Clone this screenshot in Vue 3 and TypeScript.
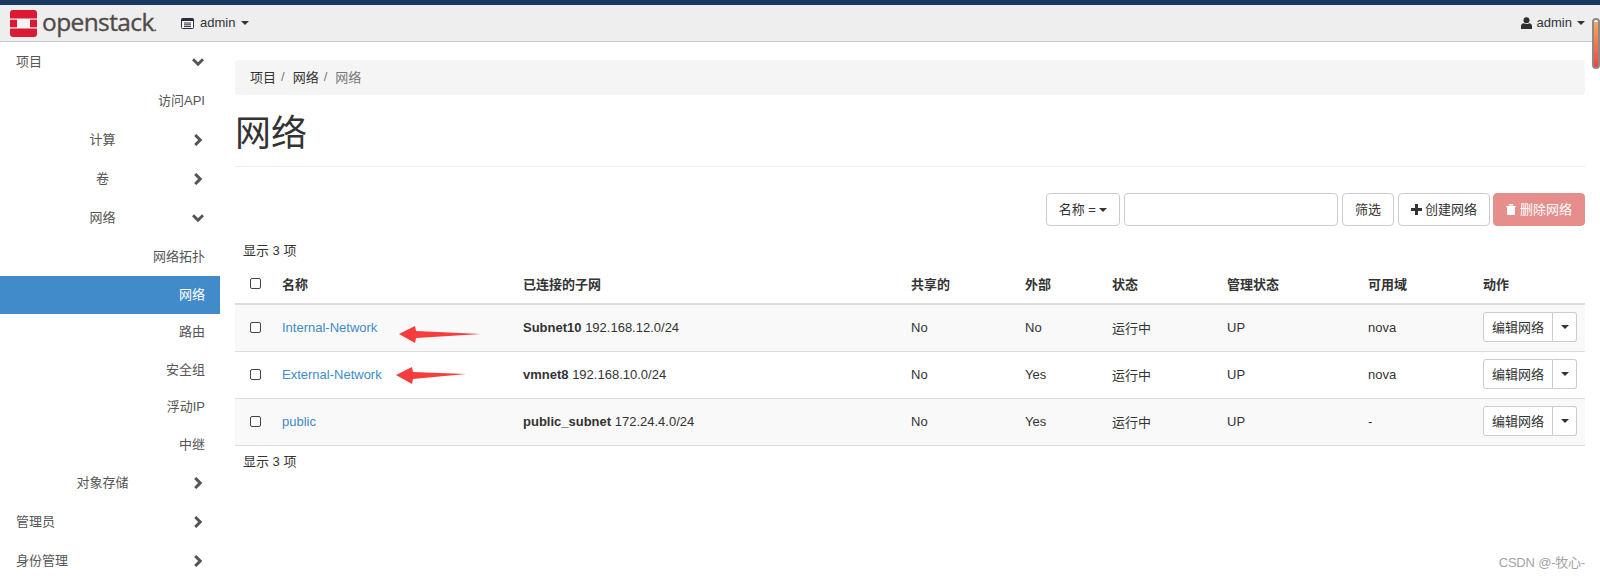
<script setup lang="ts">
interface SideItem { label: string; kind: 'top' | 'group' | 'leaf'; chevron?: 'right' | 'down'; active?: boolean; tall?: boolean }
interface NetRow { name: string; subnet: string; cidr: string; external: string; zone: string; odd: boolean }

const sideItems: SideItem[] = [
  { label: '项目', kind: 'top', chevron: 'down' },
  { label: '访问API', kind: 'leaf', tall: true },
  { label: '计算', kind: 'group', chevron: 'right' },
  { label: '卷', kind: 'group', chevron: 'right' },
  { label: '网络', kind: 'group', chevron: 'down' },
  { label: '网络拓扑', kind: 'leaf', tall: true },
  { label: '网络', kind: 'leaf', active: true },
  { label: '路由', kind: 'leaf' },
  { label: '安全组', kind: 'leaf' },
  { label: '浮动IP', kind: 'leaf' },
  { label: '中继', kind: 'leaf' },
  { label: '对象存储', kind: 'group', chevron: 'right' },
  { label: '管理员', kind: 'top', chevron: 'right' },
  { label: '身份管理', kind: 'top', chevron: 'right' }
]

const columns = ['名称', '已连接的子网', '共享的', '外部', '状态', '管理状态', '可用域', '动作']
const widths = [39, 241, 388, 114, 87, 115, 141, 115, 110]

const rows: NetRow[] = [
  { name: 'Internal-Network', subnet: 'Subnet10', cidr: '192.168.12.0/24', external: 'No', zone: 'nova', odd: true },
  { name: 'External-Network', subnet: 'vmnet8', cidr: '192.168.10.0/24', external: 'Yes', zone: 'nova', odd: false },
  { name: 'public', subnet: 'public_subnet', cidr: '172.24.4.0/24', external: 'Yes', zone: '-', odd: true }
]
</script>

<template>
  <div class="page">
    <header class="navbar">
      <svg class="logo" width="27" height="27" viewBox="0 0 27 27">
        <rect x="0" y="0" width="27" height="27" rx="3" fill="#da1a32" />
        <rect x="7" y="8.5" width="13" height="10" fill="#f4f4f4" />
        <rect x="0" y="8.5" width="7" height="1.2" fill="#f4f4f4" />
        <rect x="0" y="17.3" width="7" height="1.2" fill="#f4f4f4" />
        <rect x="20" y="8.5" width="7" height="1.2" fill="#f4f4f4" />
        <rect x="20" y="17.3" width="7" height="1.2" fill="#f4f4f4" />
      </svg>
      <span class="brand">openstack<span class="brand-dot">.</span></span>
      <span class="project">
        <svg width="13" height="11" viewBox="0 0 13 11">
          <rect x="0.5" y="0.5" width="12" height="10" rx="1" fill="#fff" stroke="#2c2a3a" />
          <rect x="0.5" y="0.5" width="12" height="2.5" fill="#2c2a3a" />
          <path d="M3 5h7M3 6.8h7M3 8.6h7" stroke="#2c2a3a" stroke-width="1" />
        </svg>
        <span class="nav-text">admin</span>
        <i class="caret"></i>
      </span>
      <span class="user">
        <svg width="11" height="12" viewBox="0 0 11 12">
          <circle cx="5.5" cy="3.2" r="3" fill="#2f2f2f" />
          <path d="M0 12V9.2C0 7.4 1.3 6.2 2.8 6.2c.8.6 1.7.9 2.7.9s1.900-.3 2.700-.9C9.700 6.200 11 7.400 11 9.200V12z" fill="#2f2f2f" />
        </svg>
        <span class="nav-text">admin</span>
        <i class="caret"></i>
      </span>
    </header>

    <div class="content">
      <nav class="sidebar">
        <div
          v-for="(item, i) in sideItems"
          :key="i"
          class="side-row"
          :class="[item.kind, { active: item.active, tall: item.tall }]"
        >
          <span class="side-label">{{ item.label }}</span>
          <svg v-if="item.chevron === 'right'" class="chevron" width="12" height="12" viewBox="0 0 12 12">
            <path d="M3.200 1 8.200 6l-5 5" fill="none" stroke="#555" stroke-width="3" />
          </svg>
          <svg v-else-if="item.chevron === 'down'" class="chevron" width="12" height="12" viewBox="0 0 12 12">
            <path d="M1 3.200 6 8.200l5-5" fill="none" stroke="#555" stroke-width="3" />
          </svg>
        </div>
      </nav>

      <main class="main">
        <ol class="breadcrumb">
          <li>项目</li>
          <li class="sep">/</li>
          <li>网络</li>
          <li class="sep">/</li>
          <li class="muted">网络</li>
        </ol>
        <h1 class="title">网络</h1>

        <div class="toolbar">
          <button class="btn"><span class="btn-text">名称 =</span> <i class="caret"></i></button>
          <input class="filter" type="text" />
          <button class="btn"><span class="btn-text">筛选</span></button>
          <button class="btn">
            <svg width="11" height="11" viewBox="0 0 11 11"><path d="M5.500 0v11M0 5.500h11" stroke="#333" stroke-width="3" /></svg>
            <span class="btn-text">创建网络</span>
          </button>
          <button class="btn danger">
            <svg width="10" height="11" viewBox="0 0 10 11">
              <path d="M0 2h10v1H9v7a1 1 0 0 1-1 1H2a1 1 0 0 1-1-1V3H0zM3 0h4l.6 1.500H2.400z" fill="#fff" />
            </svg>
            <span class="btn-text">删除网络</span>
          </button>
        </div>

        <div class="count">显示 3 项</div>

        <table class="table">
          <colgroup>
            <col v-for="(w, i) in widths" :key="i" :style="{ width: w + 'px' }" />
          </colgroup>
          <thead>
            <tr>
              <th><input class="check" type="checkbox" /></th>
              <th v-for="c in columns" :key="c">{{ c }}</th>
            </tr>
          </thead>
          <tbody>
            <tr v-for="r in rows" :key="r.name" :class="{ odd: r.odd }">
              <td><input class="check" type="checkbox" /></td>
              <td><a class="link">{{ r.name }}</a></td>
              <td><strong>{{ r.subnet }}</strong> {{ r.cidr }}</td>
              <td>No</td>
              <td>{{ r.external }}</td>
              <td>运行中</td>
              <td>UP</td>
              <td>{{ r.zone }}</td>
              <td>
                <span class="split">
                  <button class="split-main">编辑网络</button>
                  <button class="split-toggle"><i class="caret"></i></button>
                </span>
              </td>
            </tr>
          </tbody>
        </table>

        <div class="count foot">显示 3 项</div>
      </main>
    </div>

    <svg class="arrow arrow-one" width="82" height="18" viewBox="0 0 82 18">
      <path d="M0 9 16 1l1 5 65 3-65 4-1 5z" fill="#f63c3c" />
    </svg>
    <svg class="arrow arrow-two" width="70" height="18" viewBox="0 0 70 18">
      <path d="M0 9 16 1l1 5 53 2-53 5-1 5z" fill="#f63c3c" />
    </svg>

    <div class="scroll-thumb"><span></span></div>
    <div class="watermark">CSDN @-牧心-</div>
  </div>
</template>

<style>
html, body { margin: 0; overflow: hidden; background: #fff; }
</style>

<style scoped>
.page {
  position: relative;
  height: 579px;
  overflow: hidden;
  font-family: "Liberation Sans", "Noto Sans CJK SC", sans-serif;
  font-size: 13px;
  color: #333;
}
.navbar {
  box-sizing: border-box;
  height: 42px;
  display: flex;
  align-items: center;
  padding-right: 15px;
  background: #eee;
  border-top: 5px solid #1a3961;
  border-bottom: 1px solid #ccc;
}
.logo { margin-left: 10px; flex: none; }
.brand {
  margin-left: 5px;
  width: 139px;
  font-family: "Open Sans", sans-serif;
  font-size: 24.5px;
  -webkit-text-stroke: 0.35px #4f4b49;
  letter-spacing: -0.6px;
  color: #4f4b49;
  line-height: 1;
  padding-bottom: 2px;
}
.brand-dot { font-size: 11px; }
.nav-text { padding-bottom: 2px; }
.project, .user { display: flex; align-items: center; gap: 6px; }
.user { margin-left: auto; gap: 5px; }
.caret {
  display: inline-block;
  width: 0;
  height: 0;
  border-top: 4px solid #333;
  border-left: 4px solid transparent;
  border-right: 4px solid transparent;
  vertical-align: middle;
}
.content { display: flex; }
.sidebar { width: 220px; flex: none; display: flex; flex-direction: column; }
.side-row {
  box-sizing: border-box;
  height: 39px;
  display: flex;
  align-items: center;
  color: #555;
}
.side-label { padding-bottom: 3px; }
.side-row.leaf { height: 37.5px; }
.side-row.leaf.tall { height: 39px; }
.side-row.top { padding-left: 16px; }
.side-row.group .side-label { width: 205px; text-align: center; }
.side-row.leaf { justify-content: flex-end; padding-right: 15px; }
.side-row.active { background: #428bca; color: #fff; }
.chevron { margin-left: auto; margin-right: 16px; flex: none; }
.side-row.group .chevron { margin-left: -13px; }
.main { box-sizing: border-box; width: 1380px; padding: 18px 15px 0; }
.breadcrumb {
  list-style: none;
  margin: 0;
  padding: 0 15px 3px;
  box-sizing: border-box;
  height: 35px;
  display: flex;
  align-items: center;
  gap: 5px;
  background: #f5f5f5;
  border-radius: 4px;
}
.sep { color: #777; padding-right: 3px; }
.muted { color: #777; }
.title {
  margin: 0;
  padding: 14px 0 8px;
  font-size: 36px;
  font-weight: 400;
  line-height: 49px;
  color: #333;
  border-bottom: 1px solid #eee;
}
.toolbar {
  display: flex;
  justify-content: flex-end;
  gap: 4px;
  margin-top: 26px;
}
.btn {
  box-sizing: border-box;
  height: 33px;
  padding: 0 12px;
  font: inherit;
  color: #333;
  background: #fff;
  border: 1px solid #ccc;
  border-radius: 4px;
  display: flex;
  align-items: center;
  gap: 3px;
}
.btn-text { padding-bottom: 2px; }
.btn.danger { background: #e68e8b; border-color: #e68e8b; color: #fff; gap: 4px; margin-left: -1px; }
.filter {
  box-sizing: border-box;
  width: 214px;
  height: 33px;
  border: 1px solid #ccc;
  border-radius: 4px;
  background: #fff;
}
.count { padding: 16px 8px 0; line-height: 18px; }
.count.foot { padding-top: 7px; }
.table {
  width: 1350px;
  table-layout: fixed;
  border-collapse: collapse;
  margin-top: 4px;
}
th, td { padding: 0 8px; text-align: left; }
th { height: 39px; font-weight: 700; border-bottom: 2px solid #ddd; }
td { height: 44px; padding-bottom: 2px; border-bottom: 1px solid #ddd; }
tr.odd td { background: #f9f9f9; }
.check {
  appearance: none;
  display: block;
  box-sizing: border-box;
  width: 11px;
  height: 11px;
  margin: 0 0 0 7px;
  border: 1px solid #444;
  border-radius: 2px;
  background: #fff;
}
.link { color: #428bca; }
.split { display: flex; }
.split-main, .split-toggle {
  box-sizing: border-box;
  height: 30px;
  font: inherit;
  color: #333;
  background: #fff;
  border: 1px solid #ccc;
  padding: 0 0 2px;
}
.split-main { width: 70px; border-radius: 3px 0 0 3px; }
.split-toggle { width: 24px; border-left: 0; border-radius: 0 3px 3px 0; }
.arrow { position: absolute; }
.arrow-one { left: 399px; top: 325px; }
.arrow-two { left: 396px; top: 366px; }
.scroll-thumb {
  position: absolute;
  left: 1592px;
  top: 18px;
  box-sizing: border-box;
  width: 8px;
  height: 51px;
  border: 2px solid #8a8a8a;
  border-radius: 4px;
  padding: 2px 0 0;
  background: #fff;
}
.scroll-thumb span {
  display: block;
  height: 100%;
  background: linear-gradient(#f9a65c, #f4433c);
}
.watermark {
  position: absolute;
  right: 15px;
  top: 555px;
  color: #a3a3a3;
  font-size: 13px;
  letter-spacing: -0.2px;
  line-height: 15px;
}
</style>
